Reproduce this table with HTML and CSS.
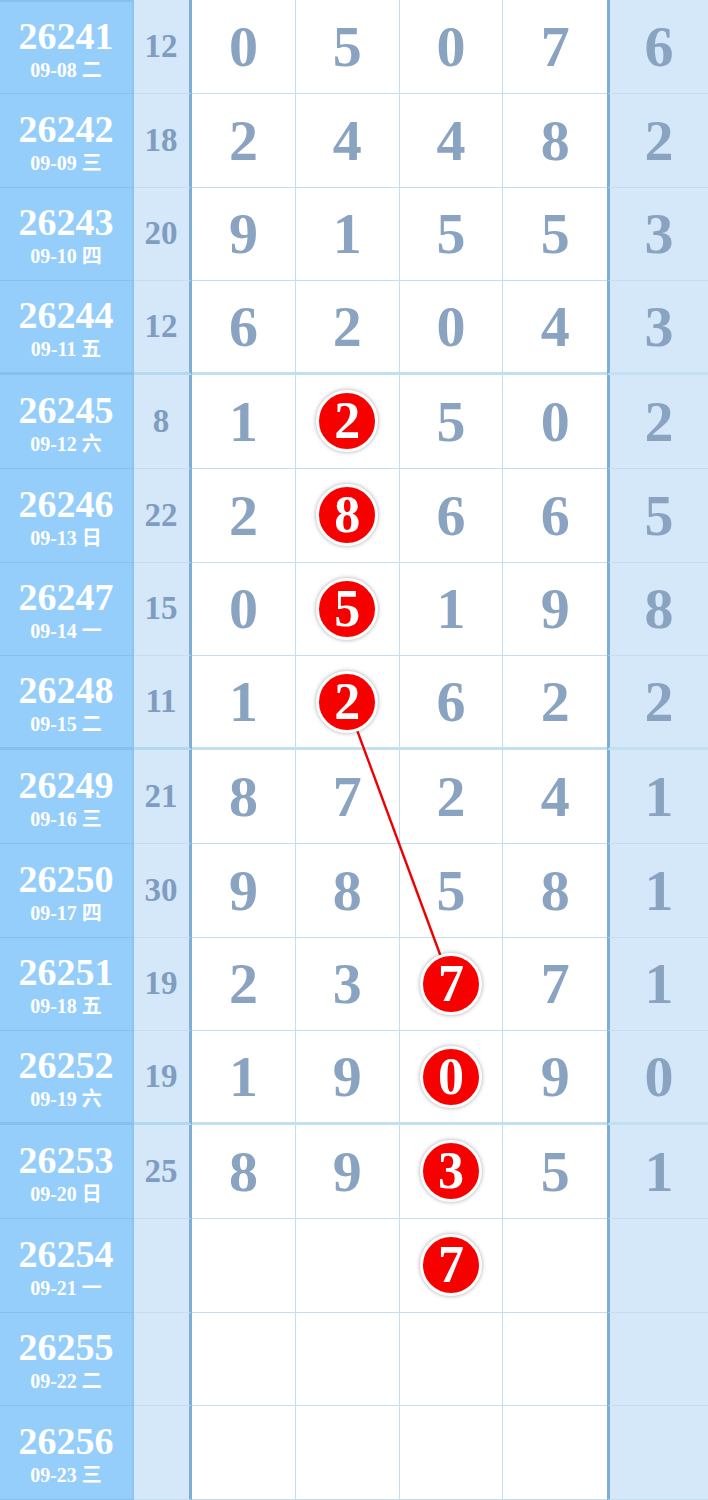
FILE: index.html
```html
<!DOCTYPE html>
<html lang="zh">
<head>
  <meta charset="UTF-8" />
  <title>走势图</title>
  <link rel="stylesheet" href="styles.css">
</head>
<body>

<div class="board">
  <div class="row first"><div class="issue"><b>26241</b><span>09-08 二</span></div><div class="sum">12</div><div class="n">0</div><div class="n">5</div><div class="n">0</div><div class="n">7</div><div class="n end">6</div></div>
  <div class="row"><div class="issue"><b>26242</b><span>09-09 三</span></div><div class="sum">18</div><div class="n">2</div><div class="n">4</div><div class="n">4</div><div class="n">8</div><div class="n end">2</div></div>
  <div class="row"><div class="issue"><b>26243</b><span>09-10 四</span></div><div class="sum">20</div><div class="n">9</div><div class="n">1</div><div class="n">5</div><div class="n">5</div><div class="n end">3</div></div>
  <div class="row sep"><div class="issue"><b>26244</b><span>09-11 五</span></div><div class="sum">12</div><div class="n">6</div><div class="n">2</div><div class="n">0</div><div class="n">4</div><div class="n end">3</div></div>

  <div class="row"><div class="issue"><b>26245</b><span>09-12 六</span></div><div class="sum">8</div><div class="n">1</div><div class="n"><i class="ball">2</i></div><div class="n">5</div><div class="n">0</div><div class="n end">2</div></div>
  <div class="row"><div class="issue"><b>26246</b><span>09-13 日</span></div><div class="sum">22</div><div class="n">2</div><div class="n"><i class="ball">8</i></div><div class="n">6</div><div class="n">6</div><div class="n end">5</div></div>
  <div class="row"><div class="issue"><b>26247</b><span>09-14 一</span></div><div class="sum">15</div><div class="n">0</div><div class="n"><i class="ball">5</i></div><div class="n">1</div><div class="n">9</div><div class="n end">8</div></div>
  <div class="row sep"><div class="issue"><b>26248</b><span>09-15 二</span></div><div class="sum">11</div><div class="n">1</div><div class="n"><i class="ball">2</i></div><div class="n">6</div><div class="n">2</div><div class="n end">2</div></div>

  <div class="row"><div class="issue"><b>26249</b><span>09-16 三</span></div><div class="sum">21</div><div class="n">8</div><div class="n">7</div><div class="n">2</div><div class="n">4</div><div class="n end">1</div></div>
  <div class="row"><div class="issue"><b>26250</b><span>09-17 四</span></div><div class="sum">30</div><div class="n">9</div><div class="n">8</div><div class="n">5</div><div class="n">8</div><div class="n end">1</div></div>
  <div class="row"><div class="issue"><b>26251</b><span>09-18 五</span></div><div class="sum">19</div><div class="n">2</div><div class="n">3</div><div class="n"><i class="ball">7</i></div><div class="n">7</div><div class="n end">1</div></div>
  <div class="row sep"><div class="issue"><b>26252</b><span>09-19 六</span></div><div class="sum">19</div><div class="n">1</div><div class="n">9</div><div class="n"><i class="ball">0</i></div><div class="n">9</div><div class="n end">0</div></div>

  <div class="row"><div class="issue"><b>26253</b><span>09-20 日</span></div><div class="sum">25</div><div class="n">8</div><div class="n">9</div><div class="n"><i class="ball">3</i></div><div class="n">5</div><div class="n end">1</div></div>
  <div class="row"><div class="issue"><b>26254</b><span>09-21 一</span></div><div class="sum"></div><div class="n"></div><div class="n"></div><div class="n"><i class="ball">7</i></div><div class="n"></div><div class="n end"></div></div>
  <div class="row"><div class="issue"><b>26255</b><span>09-22 二</span></div><div class="sum"></div><div class="n"></div><div class="n"></div><div class="n"></div><div class="n"></div><div class="n end"></div></div>
  <div class="row"><div class="issue"><b>26256</b><span>09-23 三</span></div><div class="sum"></div><div class="n"></div><div class="n"></div><div class="n"></div><div class="n"></div><div class="n end"></div></div>

  <!-- linia trendu: 26248 -> 26251 -->
  <svg class="trend" width="708" height="1500" viewBox="0 0 708 1500">
    <line x1="347" y1="703" x2="451" y2="984" stroke="#ee0000" stroke-width="2.4" />
  </svg>
</div>

</body>
</html>
```

FILE: styles.css
```css
body {
  margin: 0;
  background: #fff;
  font-family: 'Liberation Serif', 'Noto Sans CJK SC', serif;
}
.board {
  position: relative;
  width: 708px;
}
.row {
  display: grid;
  grid-template-columns: 134px 58px repeat(4, 1fr) 101px;
  height: 93.75px;
}
.row > div {
  box-sizing: border-box;
  border-bottom: 1px solid #c3def0;
  display: flex;
  align-items: center;
  justify-content: center;
}
.row.sep > div {
  border-bottom: 3px solid #c3e0f0;
}
.row.first > .issue {
  border-top: 2px solid #87c1ea;
}
.issue {
  background: #95cefb;
  border-right: 2px solid #8cc5ef;
  flex-direction: column;
  color: #fff;
  line-height: 1;
}
.row > .issue,
.row.sep > .issue {
  border-bottom-color: #87c1ea;
}
.issue b {
  font-size: 38px;
  font-weight: bold;
  padding-top: 2px;
}
.issue span {
  font-size: 20px;
  font-weight: bold;
  margin-top: 5px;
}
.sum {
  background: #d5e8f9;
  border-right: 3px solid #7eaed4;
  color: #7f9dc0;
  font-size: 33px;
  font-weight: bold;
  padding-right: 1px;
}
.row.sep > .sum {
  border-bottom-color: #b5d8ee;
}
.n {
  border-right: 1px solid #c3def0;
  color: #8aa3c1;
  font-size: 58px;
  font-weight: bold;
}
.n:nth-child(6) {
  border-right: none;
}
.n.end {
  background: #d5e8f9;
  border-left: 3px solid #7eaed4;
  border-right: none;
}
.ball {
  position: relative;
  z-index: 2;
  width: 56px;
  height: 56px;
  border-radius: 50%;
  background: #f70000;
  border: 3px solid #fff;
  box-shadow: 0 0 4px rgba(0, 0, 0, 0.35);
  color: #fff;
  font-style: normal;
  font-size: 52px;
  line-height: 56px;
  text-align: center;
}
.trend {
  position: absolute;
  left: 0;
  top: 0;
  z-index: 1;
  pointer-events: none;
}
```
